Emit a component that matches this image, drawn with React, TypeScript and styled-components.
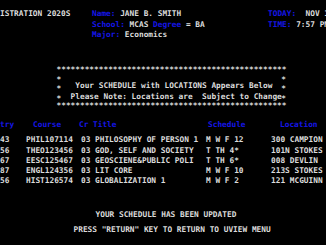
import React from 'react';
import styled, { createGlobalStyle } from 'styled-components';

const GlobalStyle = createGlobalStyle`
  html, body {
    margin: 0;
    padding: 0;
    background: #000;
    overflow: hidden;
  }
`;

const BLUE = '#1616e8';

const COURSES = [
  { entry: '43', course: 'PHIL107114', cr: '03', title: 'PHILOSOPHY OF PERSON 1', schedule: 'M W F 12', location: '300 CAMPION' },
  { entry: '56', course: 'THEO123456', cr: '03', title: 'GOD, SELF AND SOCIETY', schedule: 'T TH 4*', location: '101N STOKES' },
  { entry: '67', course: 'EESC125467', cr: '03', title: 'GEOSCIENE&PUBLIC POLI', schedule: 'T TH 6*', location: '008 DEVLIN' },
  { entry: '87', course: 'ENGL124356', cr: '03', title: 'LIT CORE', schedule: 'M W F 10', location: '213S STOKES' },
  { entry: '56', course: 'HIST126574', cr: '03', title: 'GLOBALIZATION 1', schedule: 'M W F 2', location: '121 MCGUINN' },
];

function App() {
  return (
    <>
      <GlobalStyle />
      <Screen>
        {/* 头部信息 */}
        <InfoGrid>
          <span>ISTRATION 2020S</span>
          <span><Label>Name:</Label> JANE B. SMITH</span>
          <span><Label>TODAY:</Label>  NOV 12</span>
          <span></span>
          <span><Label>School:</Label> MCAS <Label>Degree</Label> = BA</span>
          <span><Label>TIME:</Label> 7:57 PM</span>
          <span></span>
          <span><Label>Major:</Label> Economics</span>
          <span></span>
        </InfoGrid>

        {/* 星号框 */}
        <Banner>
          <StarLine>{'*'.repeat(49)}</StarLine>
          <BannerBody>
            <SideStars>{'*\n*\n*'}</SideStars>
            <BannerText>
              <BannerLine $indent={3}>Your SCHEDULE with LOCATIONS Appears Below</BannerLine>
              <BannerLine $indent={2}>Please Note: Locations are  Subject to Change</BannerLine>
            </BannerText>
            <SideStars>{'*\n*\n*'}</SideStars>
          </BannerBody>
          <StarLine>{'*'.repeat(49)}</StarLine>
        </Banner>

        {/* 课表 */}
        <Table>
          <HeadRow>
            <span>try</span>
            <span>Course</span>
            <span>Cr</span>
            <span>Title</span>
            <span>Schedule</span>
            <span>Location</span>
          </HeadRow>
          {COURSES.map((c, i) => (
            <DataRow key={i}>
              <span>{c.entry}</span>
              <span>{c.course}</span>
              <span>{c.cr}</span>
              <span>{c.title}</span>
              <span>{c.schedule}</span>
              <span>{c.location}</span>
            </DataRow>
          ))}
        </Table>

        <Footer>
          <Message $left={95.5}>YOUR SCHEDULE HAS BEEN UPDATED</Message>
          <Message $left={73.5}>PRESS "RETURN" KEY TO RETURN TO UVIEW MENU</Message>
        </Footer>
      </Screen>
    </>
  );
}

const Screen = styled.div`
  width: 326px;
  height: 245px;
  box-sizing: border-box;
  padding-top: 9px;
  background: #000;
  color: #dcdcdc;
  font-family: "DejaVu Sans Mono", "Liberation Mono", monospace;
  font-weight: bold;
  font-size: 7.8px;
  white-space: pre;
  overflow: hidden;
`;

const Label = styled.span`
  color: ${BLUE};
`;

const InfoGrid = styled.div`
  display: grid;
  grid-template-columns: 92px 176px 1fr;
  grid-auto-rows: 10.6px;
  line-height: 10.6px;
`;

const Banner = styled.div`
  margin-top: 23.8px;
  margin-left: 56.5px;
  display: flex;
  flex-direction: column;
`;

const StarLine = styled.div`
  line-height: 10.1px;
  height: 10.1px;
`;

const BannerBody = styled.div`
  display: flex;
  height: 26.4px;
`;

const SideStars = styled.div`
  width: 4.7px;
  line-height: 9.5px;
`;

const BannerText = styled.div`
  width: 220px;
  padding-top: 5px;
  display: flex;
  flex-direction: column;
`;

const BannerLine = styled.div<{ $indent: number }>`
  line-height: 11px;
  padding-left: ${p => p.$indent * 4.7}px;
`;

const Table = styled.div`
  margin-top: 8.9px;
  display: flex;
  flex-direction: column;
`;

const HeadRow = styled.div`
  display: grid;
  grid-template-columns: 33px 46px 14px 115px 72px 1fr;
  line-height: 10.1px;
  color: ${BLUE};
  margin-bottom: 5.3px;
`;

const DataRow = styled.div`
  display: grid;
  grid-template-columns: 26px 55px 14px 111px 65px 1fr;
  line-height: 10.1px;
`;

const Footer = styled.div`
  margin-top: 24.4px;
  display: flex;
  flex-direction: column;
  gap: 5px;
`;

const Message = styled.div<{ $left: number }>`
  line-height: 10.1px;
  padding-left: ${p => p.$left}px;
`;

export default App;
